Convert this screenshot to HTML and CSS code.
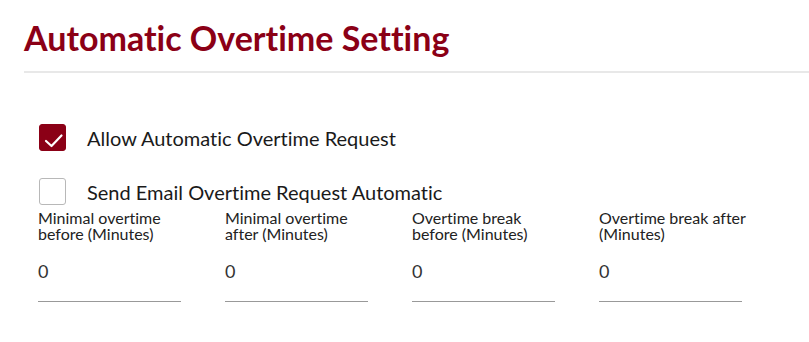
FILE: index.html
```html
<!DOCTYPE html>
<html lang="en">
<head>
    <meta charset="UTF-8">
    <meta name="viewport" content="width=device-width, initial-scale=1.0">
    <title>Automatic Overtime Setting</title>
    <link rel="stylesheet" href="styles.css">
</head>
<body>
    <div class="page">
        <h1 class="title">Automatic Overtime Setting</h1>

        <div class="options">
            <label class="check-row">
                <span class="box checked">
                    <svg width="25" height="25" viewBox="0 0 25 25"><path d="M6 16 L11.5 21 L21.5 10.5" fill="none" stroke="#fff" stroke-width="2.2" stroke-linecap="round" stroke-linejoin="round"/></svg>
                </span>
                <span class="check-text">Allow Automatic Overtime Request</span>
            </label>
            <label class="check-row">
                <span class="box"></span>
                <span class="check-text">Send Email Overtime Request Automatic</span>
            </label>
        </div>

        <div class="fields">
            <div class="field">
                <div class="field-label">Minimal overtime before (Minutes)</div>
                <div class="field-input">0</div>
            </div>
            <div class="field">
                <div class="field-label">Minimal overtime after (Minutes)</div>
                <div class="field-input">0</div>
            </div>
            <div class="field">
                <div class="field-label">Overtime break before (Minutes)</div>
                <div class="field-input">0</div>
            </div>
            <div class="field">
                <div class="field-label">Overtime break after (Minutes)</div>
                <div class="field-input">0</div>
            </div>
        </div>
    </div>
</body>
</html>
```

FILE: styles.css
```css
body {
    margin: 0;
    font-family: Lato, "Open Sans", sans-serif;
    font-variant-ligatures: none;
    background: #fff;
    color: #222;
}
.page {
    padding-left: 24px;
}
.title {
    margin: 0;
    padding-top: 17px;
    padding-bottom: 12px;
    font-size: 34px;
    line-height: 42px;
    font-weight: 700;
    color: #8b0016;
    border-bottom: 2px solid #e8e8e8;
}
.options {
    padding-top: 51px;
    padding-left: 15px;
}
.check-row {
    display: flex;
    align-items: center;
    gap: 21px;
    height: 27px;
    margin-bottom: 27px;
}
.check-row:last-child {
    margin-bottom: 0;
}
.box {
    box-sizing: border-box;
    width: 27px;
    height: 27px;
    border: 1px solid #b8b8b8;
    border-radius: 3px;
}
.box svg {
    display: block;
}
.box.checked {
    background: #8b0016;
    border-color: #8b0016;
}
.check-text {
    font-size: 20px;
    color: #1a1a1a;
}
.fields {
    display: grid;
    grid-template-columns: repeat(4, 152px);
    column-gap: 35px;
    padding-left: 14px;
    padding-top: 5px;
}
.field-label {
    font-size: 16px;
    line-height: 16px;
    color: #222;
    height: 32px;
}
.field-input {
    width: 143px;
    margin-top: 16px;
    font-size: 18px;
    line-height: 26px;
    color: #333;
    padding-bottom: 17px;
    border-bottom: 1px solid #999;
}
```
